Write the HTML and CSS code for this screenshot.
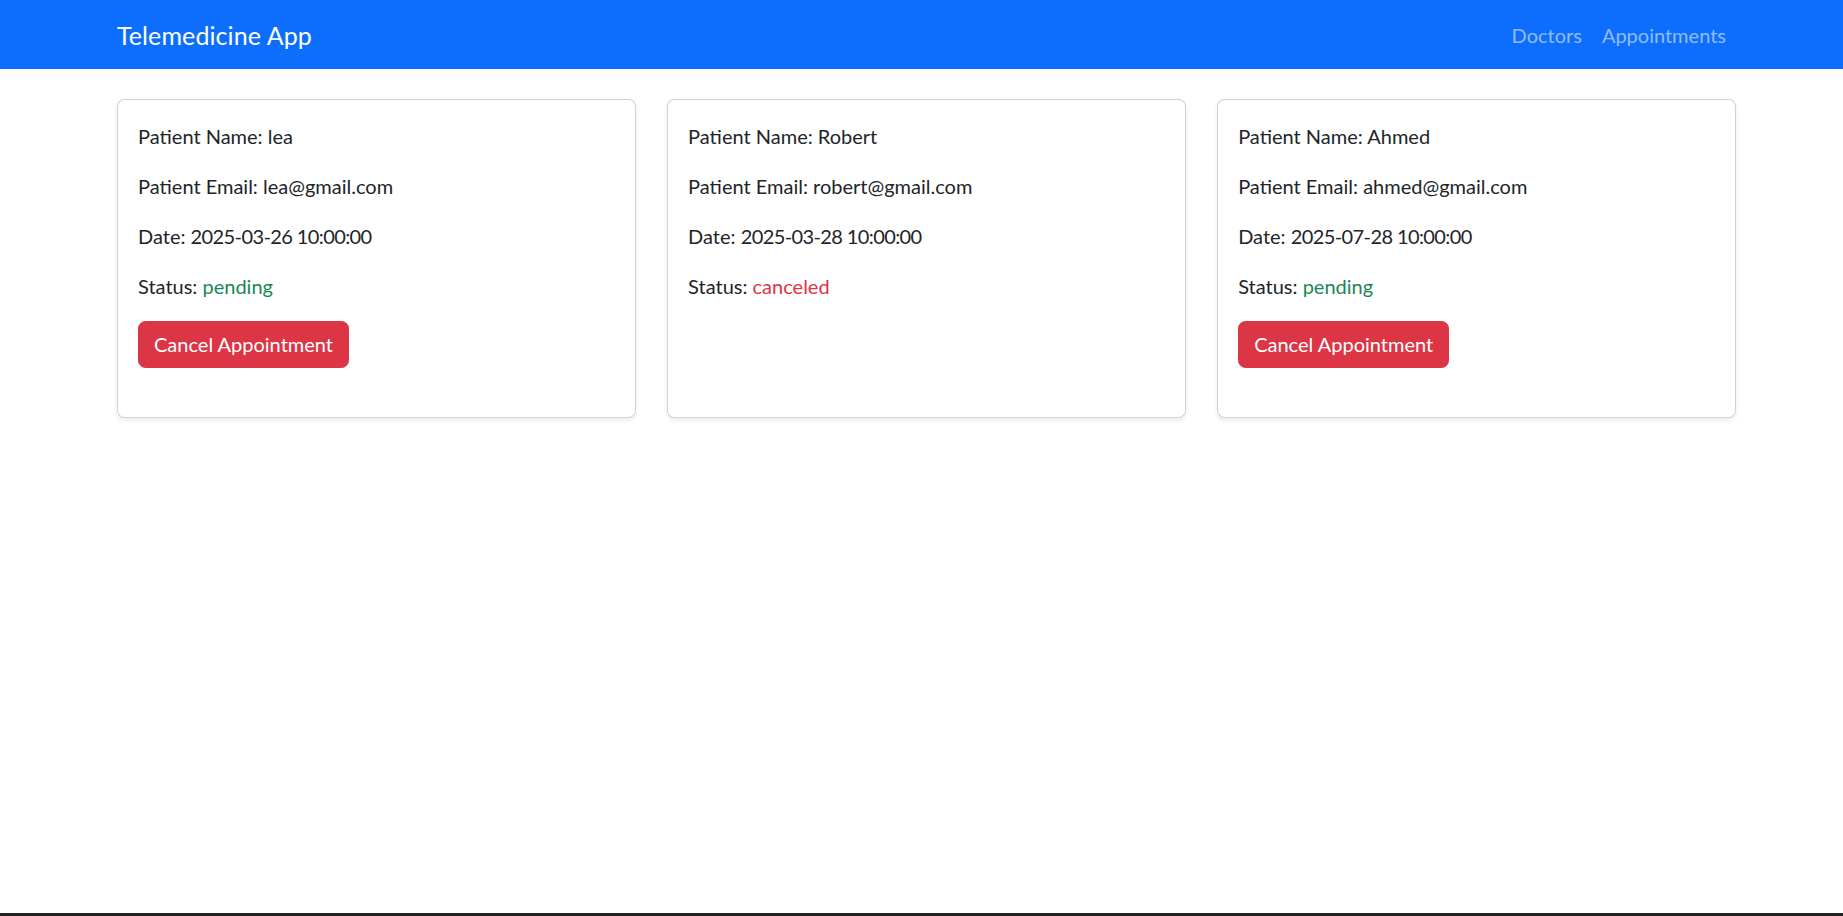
FILE: index.html
```html
<!DOCTYPE html>
<html lang="en">
<head>
<meta charset="utf-8">
<title>Telemedicine App</title>
<link rel="stylesheet" href="styles.css">
</head>
<body>
<div class="page">
  <nav class="navbar">
    <div class="container nav-inner">
      <a class="brand" href="#">Telemedicine App</a>
      <ul class="nav-links">
        <li><a href="#">Doctors</a></li>
        <li><a href="#">Appointments</a></li>
      </ul>
    </div>
  </nav>
  <main class="container cards">
    <div class="card">
      <div class="card-body">
        <p>Patient Name: lea</p>
        <p>Patient Email: lea@gmail.com</p>
        <p>Date: <span class="date">2025-03-26 10:00:00</span></p>
        <p>Status: <span class="pending">pending</span></p>
        <button class="btn-danger" type="button">Cancel Appointment</button>
      </div>
    </div>
    <div class="card">
      <div class="card-body">
        <p>Patient Name: Robert</p>
        <p>Patient Email: robert@gmail.com</p>
        <p>Date: <span class="date">2025-03-28 10:00:00</span></p>
        <p>Status: <span class="canceled">canceled</span></p>
      </div>
    </div>
    <div class="card">
      <div class="card-body">
        <p>Patient Name: Ahmed</p>
        <p>Patient Email: ahmed@gmail.com</p>
        <p>Date: <span class="date">2025-07-28 10:00:00</span></p>
        <p>Status: <span class="pending">pending</span></p>
        <button class="btn-danger" type="button">Cancel Appointment</button>
      </div>
    </div>
  </main>
  <div class="bottom-edge"></div>
</div>
</body>
</html>
```
FILE: styles.css
```css
* { box-sizing: border-box; }
html, body { margin: 0; padding: 0; }
body {
  font-family: Lato, "Open Sans", sans-serif;
  font-size: 20px;
  line-height: 30px;
  color: #212529;
  background: #fff;
}
.page {
  min-height: 100vh;
  display: flex;
  flex-direction: column;
}
.container {
  width: 1619px;
  margin-left: 117px;
}
.navbar {
  background: #0d6efd;
  height: 69px;
  display: flex;
  align-items: center;
}
.nav-inner {
  display: flex;
  align-items: center;
  justify-content: space-between;
}
.brand {
  color: #fff;
  text-decoration: none;
  font-size: 25px;
  line-height: 37px;
  padding: 7px 0 5px;
  letter-spacing: 0.1px;
}
.nav-links {
  list-style: none;
  margin: 0;
  padding: 0;
  display: flex;
}
.nav-links a {
  display: block;
  padding: 10px;
  color: rgba(255, 255, 255, 0.55);
  text-decoration: none;
  font-size: 20px;
  line-height: 30px;
  margin-top: 1px;
}
.cards {
  margin-top: 30px;
  display: grid;
  grid-template-columns: repeat(3, 1fr);
  column-gap: 31.25px;
  align-items: stretch;
}
.card {
  border: 1.25px solid rgba(0, 0, 0, 0.175);
  border-radius: 7.5px;
  box-shadow: 0 2.5px 5px rgba(0, 0, 0, 0.075);
  background: #fff;
}
.card-body {
  padding: 20.5px 20px 20px;
}
.card-body p {
  margin: 0 0 20px 0;
}
.date { letter-spacing: -0.6px; }
.pending { color: #198754; }
.canceled { color: #dc3545; }
.btn-danger {
  font: inherit;
  color: #fff;
  background: #dc3545;
  border: 1.25px solid #dc3545;
  border-radius: 7.5px;
  padding: 7.5px 15px;
  height: 47px;
  margin-bottom: 29px;
  cursor: pointer;
}
.bottom-edge {
  margin-top: auto;
  height: 3px;
  background: #222;
}
```
